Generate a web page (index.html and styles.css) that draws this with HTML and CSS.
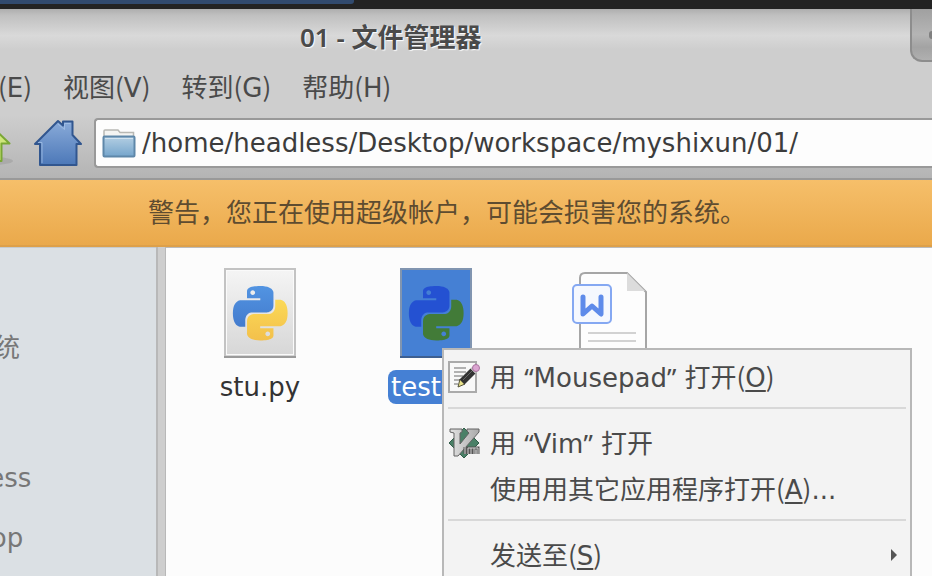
FILE: index.html
```html
<!DOCTYPE html>
<html lang="zh-CN">
<head>
<meta charset="utf-8">
<title>01 - 文件管理器</title>
<link rel="stylesheet" href="styles.css">
</head>
<body>
<svg class="defs" aria-hidden="true">
  <defs>
    <linearGradient id="paper" x1="0" y1="0" x2="0" y2="1"><stop offset="0" stop-color="#f5f5f5"/><stop offset="1" stop-color="#d6d6d6"/></linearGradient>
    <linearGradient id="pyBlue" x1="0" y1="0" x2="0" y2="1"><stop offset="0" stop-color="#5294e2"/><stop offset="1" stop-color="#437bcd"/></linearGradient>
    <linearGradient id="pyYellow" x1="0" y1="1" x2="0" y2="0"><stop offset="0" stop-color="#fbd957"/><stop offset="1" stop-color="#f3c04b"/></linearGradient>
    <linearGradient id="house" x1="0" y1="0" x2="0" y2="1"><stop offset="0" stop-color="#8aabd9"/><stop offset="1" stop-color="#4c78b8"/></linearGradient>
    <linearGradient id="folder" x1="0" y1="0" x2="0" y2="1"><stop offset="0" stop-color="#b4cfe3"/><stop offset="1" stop-color="#75a5cc"/></linearGradient>
    <linearGradient id="metal" x1="0" y1="0" x2="1" y2="0"><stop offset="0" stop-color="#e2e2e2"/><stop offset="1" stop-color="#aaaaaa"/></linearGradient>
    <path id="snake" d="M14.25.18l.9.2.73.26.59.3.45.32.34.34.25.34.16.33.1.3.04.26.02.2-.01.13V8.5l-.05.63-.13.55-.21.46-.26.38-.3.31-.33.25-.35.19-.35.14-.33.1-.3.07-.26.04-.21.02H8.77l-.69.05-.59.14-.5.22-.41.27-.33.32-.27.35-.2.36-.15.37-.1.35-.07.32-.04.27-.02.21v3.06H3.17l-.21-.03-.28-.07-.32-.12-.35-.18-.36-.26-.36-.36-.35-.46-.32-.59-.28-.73-.21-.88-.14-1.05-.05-1.23.06-1.22.16-1.04.24-.87.32-.71.36-.57.4-.44.42-.33.42-.24.4-.16.36-.1.32-.05.24-.01h.16l.06.01h8.16v-.83H6.18l-.01-2.75-.02-.37.05-.34.11-.31.17-.28.25-.26.31-.23.38-.2.44-.18.51-.15.58-.12.64-.1.71-.06.77-.04.84-.02 1.27.05zm-6.3 1.98l-.23.33-.08.41.08.41.23.34.33.22.41.09.41-.09.33-.22.23-.34.08-.41-.08-.41-.23-.33-.33-.22-.41-.09-.41.09z"/>
  </defs>
</svg>

<div class="panel"><div class="panel-task"></div></div>

<div class="window">
  <header class="titlebar">
    <h1 class="title">01 - 文件管理器</h1>
    <button class="window-buttons" aria-label="窗口按钮"><span class="window-dot"></span></button>
  </header>

  <nav class="menubar">
    <button class="menu-button">编辑<span class="paren">(</span>E<span class="paren">)</span></button>
    <button class="menu-button">视图<span class="paren">(</span>V<span class="paren">)</span></button>
    <button class="menu-button">转到<span class="paren">(</span>G<span class="paren">)</span></button>
    <button class="menu-button">帮助<span class="paren">(</span>H<span class="paren">)</span></button>
  </nav>

  <div class="toolbar">
    <button class="tool up" aria-label="上级目录">
      <svg width="48" height="48" viewBox="0 0 48 48"><ellipse cx="26" cy="42" rx="22" ry="4" fill="#8d8d8d" opacity=".35"/><path d="M24 5 L44.500 24.500 H36.500 V42 H11 V24.500 H4z" fill="#cfe67c" stroke="#7aa735" stroke-width="2" stroke-linejoin="round"/></svg>
    </button>
    <button class="tool home" aria-label="主文件夹">
      <svg width="48" height="48" viewBox="0 0 48 48"><path d="M24 2 L29 6.500 V2.500 H38.500 V16 L47 25 H42.500 V46 H6 V25 H1z" fill="url(#house)" stroke="#31568f" stroke-width="2" stroke-linejoin="round"/><path d="M4 23.500 H8 V44 M24 5 L30.500 10.500 V4.500 H36.500" fill="none" stroke="#a4c0e6" stroke-width="1" opacity=".8"/></svg>
    </button>
    <div class="location">
      <svg width="34" height="30" viewBox="0 0 34 30"><path d="M2 9 V3 Q2 2 3 2 H16 L18 4.500 H31.500 V9z" fill="#f4f4f2" stroke="#b8b8b4" stroke-width="1.500"/><rect x="1.500" y="8.500" width="31" height="20" rx="1" fill="url(#folder)" stroke="#5e87a9" stroke-width="2"/><path d="M3 10.500 H31" stroke="#d3e3ef"/></svg>
      <input class="path" type="text" aria-label="位置" value="/home/headless/Desktop/workspace/myshixun/01/">
    </div>
  </div>

  <p class="warning">警告，您正在使用超级帐户，可能会损害您的系统。</p>

  <main class="content">
    <aside class="sidebar">
      <ul class="places">
        <li>文件系统</li>
        <li class="user">headless</li>
        <li>Desktop</li>
      </ul>
    </aside>
    <div class="splitter"></div>
    <section class="files">
      <figure class="file">
        <svg width="72" height="90" viewBox="0 0 72 90"><rect x="1" y="1" width="70" height="88" fill="url(#paper)" stroke="#c3c3c3" stroke-width="2"/><rect x="2.500" y="2.500" width="67" height="84" fill="none" stroke="#fafafa"/><path d="M0 89H72" stroke="#9a9a9a" stroke-width="2"/><g transform="translate(9 18) scale(2.270)"><use href="#snake" fill="url(#pyBlue)"/><use href="#snake" fill="url(#pyYellow)" transform="rotate(180 12 12)"/></g></svg>
        <figcaption class="name">stu.py</figcaption>
      </figure>
      <figure class="file">
        <svg width="72" height="90" viewBox="0 0 72 90"><rect x="1" y="1" width="70" height="88" fill="#4580d4" stroke="#8195b0" stroke-width="2"/><path d="M0 89H72" stroke="#3d5f91" stroke-width="2"/><g transform="translate(9 18) scale(2.270)"><use href="#snake" fill="#2451d2"/><use href="#snake" fill="#427b38" transform="rotate(180 12 12)"/></g></svg>
        <figcaption class="name selected">test.py</figcaption>
      </figure>
      <figure class="file">
        <svg width="80" height="90" viewBox="0 0 80 90"><path d="M8 90 V10 Q8 5 13 5 H55 L74 24 V90z" fill="#fdfdfd" stroke="#a6a6a6" stroke-width="2"/><path d="M55 5 V23 H73z" fill="#dcdcdc"/><rect x="1" y="17" width="38" height="38" rx="4" fill="#f5f8fe" stroke="#85a8f2" stroke-width="2"/><path d="M11 29 V46 L20 38 L29 46 V29" fill="none" stroke="#5e8bea" stroke-width="5" stroke-linecap="round" stroke-linejoin="round"/><path d="M16 65 H64 M16 73 H64" stroke="#d2d2d2" stroke-width="2"/></svg>
      </figure>
    </section>
  </main>
</div>

<div class="context-menu" role="menu">
  <button class="item" role="menuitem">
    <svg width="32" height="32" viewBox="0 0 32 32"><rect x="1" y="1" width="27" height="30" fill="#f8f8f8" stroke="#aaaaaa" stroke-width="2"/><path d="M6 7H18M6 11H18M6 15H15M6 19H12M6 23H10" stroke="#999" stroke-width="1.500"/><path d="M10 26 L12 18 L17 23z" fill="#e9e28a" stroke="#555338"/><path d="M14 21 L25 10" stroke="#333" stroke-width="7"/><path d="M15 19 L24 10" stroke="#666" stroke-width="1"/><path d="M25 10 L27 8" stroke="#c0c0c0" stroke-width="7"/><circle cx="28" cy="7" r="3.500" fill="#dba5d1" stroke="#a9739f"/></svg>
    <span class="label">用 <span class="quote">“</span>Mousepad<span class="quote">”</span> 打开<span class="paren">(</span><u>O</u><span class="paren">)</span></span>
  </button>
  <hr class="separator">
  <button class="item" role="menuitem">
    <svg width="32" height="32" viewBox="0 0 32 32"><path d="M16 1 L31 16 L16 31 L1 16z" fill="#4a8067" stroke="#315c49"/><path d="M2 2 H14 V5 L12 6 V17 L21 6 L19 4 V2 H31 V5 L10 29 H6 V6 L2 5z" fill="url(#metal)" stroke="#626262"/><path d="M17 20V27M20 27V21H23V27M23 21H26V27M26 21H30V27" fill="none" stroke="#555" stroke-width="3"/><path d="M17 20V27M20 27V21H23V27M23 21H26V27M26 21H30V27" fill="none" stroke="#d0d0d0" stroke-width="1"/></svg>
    <span class="label">用 <span class="quote">“</span>Vim<span class="quote">”</span> 打开</span>
  </button>
  <button class="item" role="menuitem"><span class="label">使用用其它应用程序打开<span class="paren">(</span><u>A</u><span class="paren">)</span>...</span></button>
  <hr class="separator">
  <button class="item" role="menuitem">
    <span class="label">发送至<span class="paren">(</span><u>S</u><span class="paren">)</span></span>
    <svg class="arrow" width="8" height="14" viewBox="0 0 8 14"><path d="M1 1 L7 7 L1 13z" fill="#555"/></svg>
  </button>
</div>
</body>
</html>
```
FILE: styles.css
```css
* {
  box-sizing: border-box;
}

body {
  margin: 0;
  height: 100vh;
  display: flex;
  flex-direction: column;
  overflow: hidden;
  position: relative;
  background: #fcfcfc;
  color: #4a4a4a;
  font: 26px/32px "DejaVu Sans", "Noto Sans CJK SC", sans-serif;
}

button {
  border: 0;
  padding: 0;
  background: none;
  color: inherit;
  font: inherit;
}

svg {
  display: block;
  flex: none;
}

.defs {
  position: absolute;
  width: 0;
  height: 0;
}

.panel {
  flex: none;
  height: 9px;
  background: #232323;
}

.panel-task {
  width: 38%;
  height: 4px;
  background: #314a6e;
  border-radius: 0 0 3px 0;
}

.window {
  flex: 1;
  min-height: 0;
  display: flex;
  flex-direction: column;
  background: #cecece;
}

.titlebar {
  flex: none;
  display: flex;
  height: 53px;
  padding-left: 300px;
  justify-content: space-between;
  white-space: nowrap;
  background: linear-gradient(#aeaeae, #c0c0c0 12%, #d9d9d9 50%, #cecece 76%);
}

.title {
  margin: 0;
  padding-top: 12px;
  font: 600 26px/32px "Noto Sans", "Noto Sans CJK SC", sans-serif;
  text-shadow: 1px 1px 1px #fff;
}

.window-buttons {
  width: 22px;
  overflow: hidden;
  display: flex;
  align-items: center;
  justify-content: flex-end;
  border: solid #8d8d8d;
  border-width: 0 0 2px 2px;
  border-radius: 0 0 0 12px;
  background: linear-gradient(#a0a0a0, #b5b5b5 50%, #a3a3a3 75%, #b0b0b0);
}

.window-dot {
  width: 3px;
  height: 8px;
  border-radius: 4px 0 0 4px;
  background: #808080;
}

.menubar {
  flex: none;
  display: flex;
  gap: 31px;
  margin-left: -54px;
  padding: 8px 0 11px;
  white-space: nowrap;
}

.paren {
  font-family: "Noto Sans CJK SC", sans-serif;
}

.quote {
  font-family: "Noto Sans", sans-serif;
}

.toolbar {
  flex: none;
  display: flex;
  align-items: center;
  gap: 12px;
  height: 65px;
  padding-bottom: 7px;
  border-bottom: 2px solid #999;
  background: linear-gradient(#cecece, #b4b4b4);
}

.up {
  margin-left: -35px;
}

.home {
  margin-left: 9px;
}

.location {
  flex: 1;
  display: flex;
  align-items: center;
  gap: 6px;
  height: 50px;
  padding-left: 6px;
  border: solid #999;
  border-width: 2px 0 2px 2px;
  border-radius: 4px 0 0 4px;
  background: #fdfdfd;
}

.path {
  flex: 1;
  min-width: 0;
  border: 0;
  padding: 0;
  outline: 0;
  background: none;
  color: #3c3c3c;
  font: inherit;
}

.warning {
  flex: none;
  margin: 0;
  padding: 17px 148px 16px;
  border-bottom: 2px solid #dda04a;
  background: linear-gradient(#f6bf6a, #eaa94b);
  color: #5e4c30;
  white-space: nowrap;
}

.content {
  flex: 1;
  min-height: 0;
  display: flex;
}

.sidebar {
  flex: none;
  width: 156px;
  overflow: hidden;
  border-top: 1px solid #c6cacd;
  background: #dbe0e4;
  color: #777;
}

.places {
  list-style: none;
  margin: 0 0 0 -84px;
  padding: 70px 0 0;
  line-height: 60px;
}

.user {
  margin-top: 70px;
}

.splitter {
  flex: none;
  width: 10px;
  border: solid #b8b8b8;
  border-width: 0 1px 0 2px;
  background: #cecece;
}

.files {
  flex: 1;
  display: grid;
  grid-template-columns: repeat(auto-fill, 176px);
  align-content: start;
  padding: 20px 0 0 6px;
  border-top: 1px solid #bbb;
  background: #fcfcfc;
}

.file {
  margin: 0;
  display: flex;
  flex-direction: column;
  align-items: center;
  gap: 12px;
}

.name {
  padding: 1px 3px;
  border-radius: 8px;
  color: #333;
}

.name.selected {
  background: #4580d4;
  color: #fff;
}

.context-menu {
  position: absolute;
  left: 442px;
  right: 20px;
  top: 348px;
  padding: 4px;
  border: 2px solid #b8b8b8;
  background: #f3f3f3;
}

.item {
  width: 100%;
  height: 46px;
  display: flex;
  align-items: center;
  gap: 10px;
  text-align: left;
  white-space: nowrap;
}

.label:first-child {
  padding-left: 42px;
}

.label u {
  text-decoration-thickness: 2px;
  text-underline-offset: 3px;
}

.separator {
  height: 2px;
  margin: 7px 0 11px;
  border: 0;
  background: #d8d8d8;
}

.arrow {
  margin: 0 8px 0 auto;
}
```
